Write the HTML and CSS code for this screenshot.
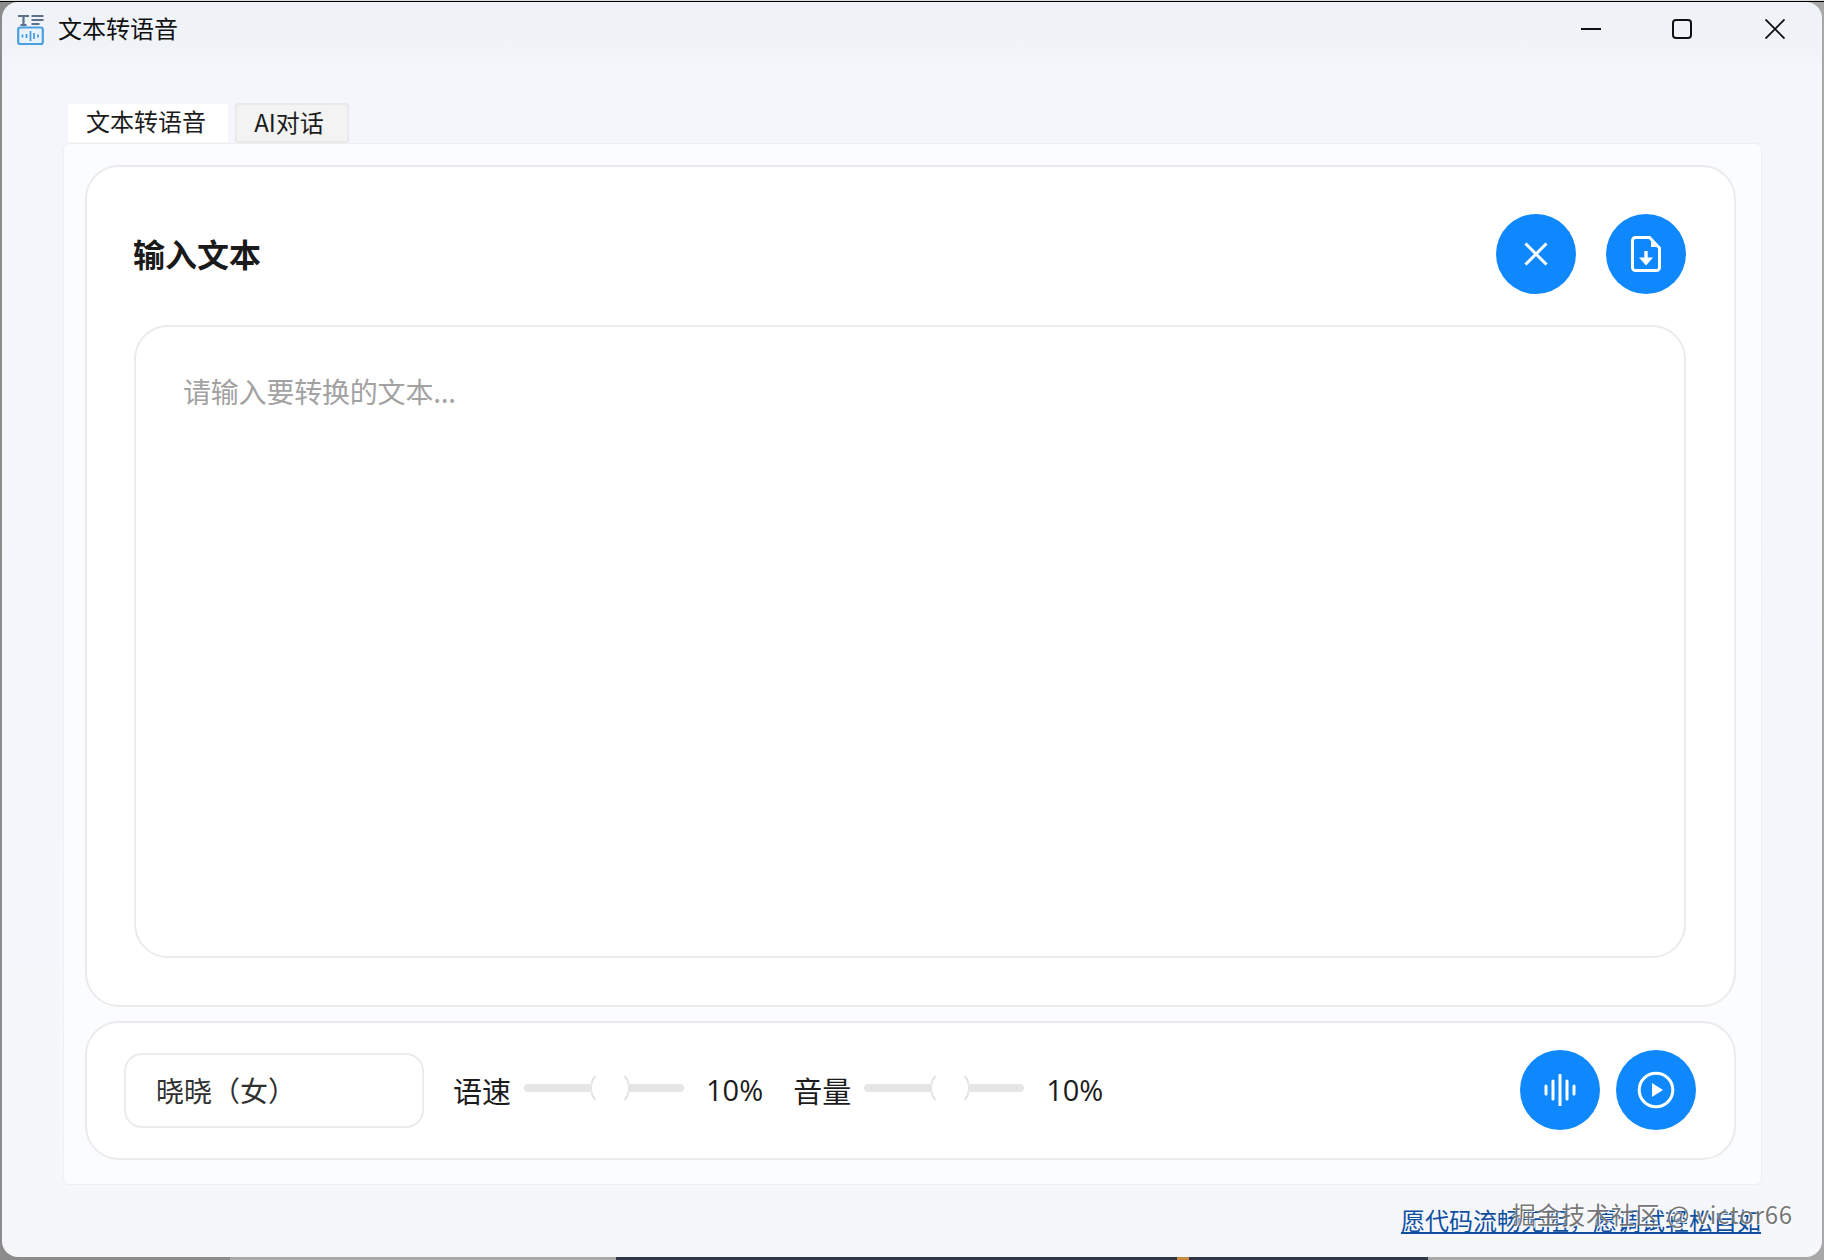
FILE: index.html
```html
<!DOCTYPE html>
<html lang="zh-CN">
<head>
<meta charset="utf-8">
<title>文本转语音</title>
<link rel="stylesheet" href="styles.css">
</head>
<body>
<div class="window">
  <header class="titlebar">
    <svg class="app-icon" width="28" height="32" viewBox="0 0 28 32">
      <path d="M1 2h11M6.500 2v9M3.500 11h6" stroke="#5d7188" stroke-width="2.200" fill="none"/>
      <path d="M14.500 2h12M14.500 6h12M14.500 10h8" stroke="#5d7188" stroke-width="1.800" fill="none"/>
      <rect x="1.200" y="13.500" width="24.600" height="16.500" rx="2" fill="#eaf3fb" stroke="#4a9fe0" stroke-width="2.200"/>
      <path d="M5.500 20.500v3M9.500 20v4M13.500 17v10M17 19v6M21 20.500v3" stroke="#3f97dc" stroke-width="1.700" fill="none"/>
    </svg>
    <span class="app-title">文本转语音</span>
    <div class="win-controls">
      <svg class="win-btn" width="20" height="20" viewBox="0 0 20 20"><path d="M0 10h20" stroke="#111" stroke-width="2"/></svg>
      <svg class="win-btn" width="20" height="20" viewBox="0 0 20 20"><rect x="1" y="1" width="18" height="18" rx="3" fill="none" stroke="#111" stroke-width="2"/></svg>
      <svg class="win-btn" width="20" height="20" viewBox="0 0 20 20"><path d="M0.500 0.500l19 19M19.500 0.500l-19 19" stroke="#111" stroke-width="1.900"/></svg>
    </div>
  </header>

  <main class="content">
    <nav class="tabs">
      <div class="tab tab-active">文本转语音</div>
      <div class="tab tab-idle">AI对话</div>
    </nav>

    <section class="panel">
      <div class="card card-input">
        <div class="input-head">
          <h2 class="input-title">输入文本</h2>
          <div class="head-actions">
            <button class="round-btn" type="button" aria-label="清空">
              <svg width="24" height="24" viewBox="0 0 24 24"><path d="M1.500 1.500l21 21M22.500 1.500l-21 21" stroke="#fff" stroke-width="3" fill="none"/></svg>
            </button>
            <button class="round-btn" type="button" aria-label="导入">
              <svg width="30" height="36" viewBox="0 0 30 36"><path d="M4.500 1.500H18.500L28.500 12v19.500a3 3 0 0 1-3 3h-21a3 3 0 0 1-3-3V4.500a3 3 0 0 1 3-3z" fill="none" stroke="#fff" stroke-width="3"/><path d="M20 5l5.500 6H20z" fill="#fff"/><path d="M15 15v12" stroke="#fff" stroke-width="3.400" fill="none"/><path d="M8 21.500H22L15 29.500z" fill="#fff"/></svg>
            </button>
          </div>
        </div>
        <div class="text-box"><span class="placeholder">请输入要转换的文本...</span></div>
      </div>

      <div class="card card-controls">
        <div class="voice-select">晓晓（女）</div>
        <span class="ctl-label label-speed">语速</span>
        <div class="slider"><div class="slider-knob"><div class="slider-disc"></div></div></div>
        <span class="ctl-value">10%</span>
        <span class="ctl-label label-volume">音量</span>
        <div class="slider"><div class="slider-knob"><div class="slider-disc"></div></div></div>
        <span class="ctl-value">10%</span>
        <div class="play-actions">
          <button class="round-btn" type="button" aria-label="试听">
            <svg width="32" height="32" viewBox="0 0 32 32"><path d="M2 12v8M9 7v18M16 1v30M23 7v18M30 12v8" stroke="#fff" stroke-width="3" stroke-linecap="round" fill="none"/></svg>
          </button>
          <button class="round-btn" type="button" aria-label="播放">
            <svg width="38" height="38" viewBox="0 0 38 38"><circle cx="19" cy="19" r="16.800" fill="none" stroke="#fff" stroke-width="3"/><path d="M15 12l11 7-11 7z" fill="#fff"/></svg>
          </button>
        </div>
      </div>
    </section>

    <footer class="footer"><a class="motto" href="#">愿代码流畅无阻，愿调试轻松自如</a></footer>
  </main>
  <span class="watermark">掘金技术社区 @ victor66</span>
</div>
</body>
</html>
```
FILE: styles.css
```css
* { box-sizing: border-box; }
html, body { margin: 0; height: 100%; }
body {
  width: 1824px;
  height: 1260px;
  overflow: hidden;
  padding: 2px 2px 3px 2px;
  background:
    linear-gradient(#dcdcdc 0 1px, #000 1px 2px, transparent 2px),
    linear-gradient(90deg, #8c8c8c 0 230px, #a8a8a8 230px 616px, #2f3748 616px 1177px, #c88a40 1177px 1189px, #2f3748 1189px 1428px, #a8a8a8 1428px);
  font-family: "Noto Sans CJK SC", "Noto Sans", sans-serif;
  color: #1c1c1c;
}
.window {
  position: relative;
  height: 100%;
  display: flex;
  flex-direction: column;
  border-radius: 16px;
  background: linear-gradient(#eff3f8 0, #f0f4f9 46px, #f4f6fb 66px, #f5f7fb 100%);
  overflow: hidden;
}
.titlebar {
  height: 58px;
  flex: none;
  display: flex;
  align-items: center;
  padding: 0 37px 0 15px;
}
.app-icon { flex: none; margin-top: -2px; }
.app-title { margin-left: 13px; font-size: 24px; line-height: 32px; margin-top: -6px; color: #111; }
.win-controls { margin-left: auto; display: flex; gap: 71px; margin-top: -4px; }
.win-btn { display: block; }
.win-btn:last-child { margin-left: 2px; }
.content { flex: 1; display: flex; flex-direction: column; padding: 43px 61px 0 62px; min-height: 0; }
.tabs { display: flex; height: 41px; flex: none; padding-left: 4px; gap: 7px; }
.tab { font-size: 24px; text-align: center; }
.tab-active { width: 160px; height: 38px; margin-top: 1px; padding-right: 4px; background: #fff; line-height: 33px; }
.tab-idle { width: 114px; height: 40px; padding-right: 6px; background: #f3f3f3; border: 2px solid #e9e9e9; border-radius: 4px; line-height: 33px; }
.panel {
  height: 1040px;
  flex: none;
  display: flex;
  flex-direction: column;
  gap: 14px;
  padding: 21px 25px 24px 21px;
  background: #fbfcfe;
  border-radius: 6px;
  box-shadow: 0 0 0 1px #eeeff2;
}
.card { background: #fff; border: 2px solid #ebebed; border-radius: 34px; }
.card-input { height: 842px; padding: 47px 48px 47px 47px; display: flex; flex-direction: column; gap: 31px; }
.input-head { display: flex; align-items: center; justify-content: space-between; height: 80px; flex: none; }
.input-title { margin: 0 0 2px -1px; font-size: 32px; font-weight: 700; line-height: 44px; color: #1a1a1a; }
.head-actions { display: flex; gap: 30px; }
.round-btn {
  width: 80px;
  height: 80px;
  flex: none;
  padding: 0;
  border: 0;
  border-radius: 50%;
  background: #0f88fd;
  display: flex;
  align-items: center;
  justify-content: center;
}
.text-box { flex: 1; border: 2px solid #ebebed; border-radius: 34px; padding: 46px 47px; }
.placeholder { font-size: 28px; line-height: 36px; color: #a2a2a2; display: block; letter-spacing: -0.200px; }
.card-controls { height: 139px; display: flex; align-items: center; padding: 0 38px 0 37px; }
.voice-select {
  width: 300px;
  height: 75px;
  border: 2px solid #ebebed;
  border-radius: 18px;
  padding-left: 30px;
  font-size: 28px;
  line-height: 71px;
  color: #303030;
}
.ctl-label { font-size: 29px; line-height: 40px; flex: none; margin-bottom: 2px; }
.label-speed { margin-left: 29px; margin-right: 13px; }
.label-volume { margin-left: 30px; margin-right: 13px; }
.slider {
  position: relative;
  width: 160px;
  height: 8px;
  flex: none;
  margin-bottom: 5px;
  border-radius: 4px;
  background: #e5e5e5;
}
.slider-knob {
  position: absolute;
  left: 66px;
  top: -8px;
  width: 40px;
  height: 24px;
  overflow: hidden;
  background: #fff;
}
.slider-disc {
  width: 40px;
  height: 40px;
  margin-top: -8px;
  border-radius: 50%;
  background: #fff;
  border: 2px solid #e4e4e6;
}
.ctl-value { margin-left: 22px; font-size: 29px; line-height: 40px; flex: none; margin-bottom: 2px; font-family: "Open Sans", "Noto Sans", sans-serif; }
.play-actions { margin-left: auto; margin-bottom: 2px; display: flex; gap: 16px; }
.footer { display: flex; justify-content: flex-end; padding-top: 21px; }
.motto { font-size: 24px; line-height: 30px; color: #0f4f9f; text-decoration: underline; }
.watermark {
  position: absolute;
  right: 29px;
  bottom: 28px;
  font-size: 24px;
  line-height: 30px;
  letter-spacing: 0.800px;
  color: rgba(95, 95, 95, 0.85);
  text-shadow: 1px 1px 0 rgba(255, 255, 255, 0.9), -1px -1px 0 rgba(255, 255, 255, 0.5);
}
```
